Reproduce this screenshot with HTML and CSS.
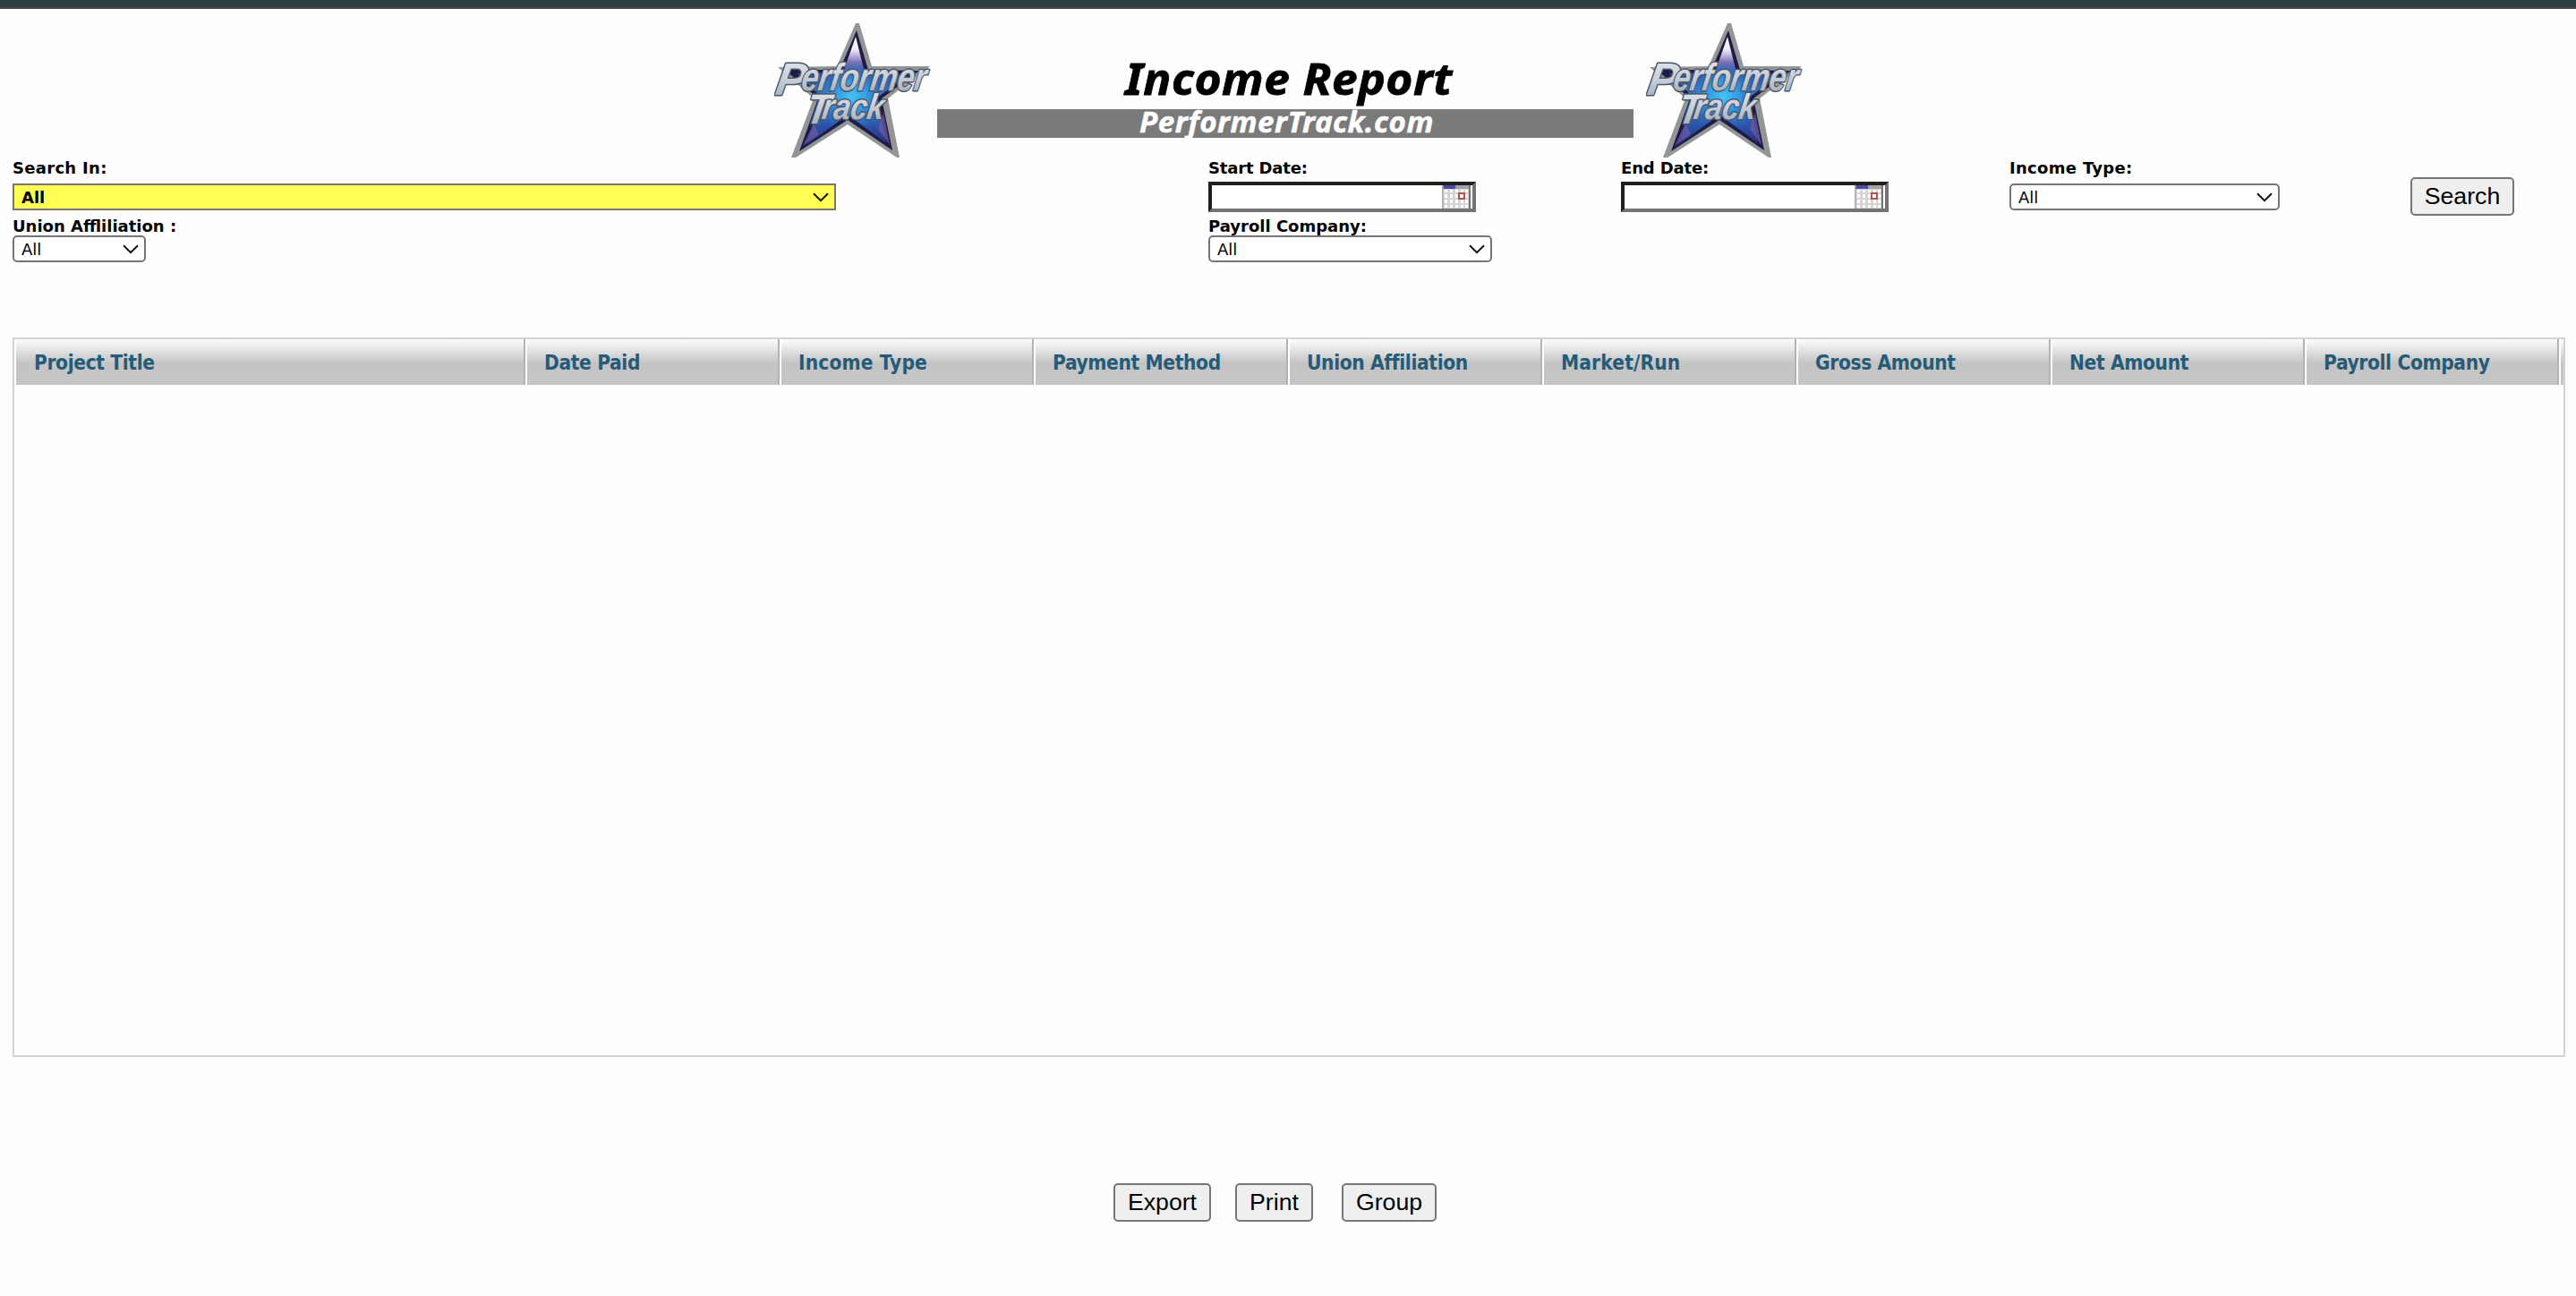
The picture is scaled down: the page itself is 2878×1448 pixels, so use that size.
FILE: index.html
```
<!DOCTYPE html>
<html lang="en">
<head>
<meta charset="utf-8">
<title>Income Report</title>
<link rel="stylesheet" href="styles.css">
</head>
<body>
<svg class="defs" width="0" height="0" aria-hidden="true">
  <defs>
    <linearGradient id="starFill" x1="0" y1="0" x2="0" y2="1">
      <stop offset="0" stop-color="#ffffff"/><stop offset=".12" stop-color="#eeeaf6"/>
      <stop offset=".23" stop-color="#8878b8"/><stop offset=".34" stop-color="#2c55ac"/>
      <stop offset=".55" stop-color="#2f80d0"/><stop offset=".78" stop-color="#2b5db4"/><stop offset="1" stop-color="#2c2a78"/>
    </linearGradient>
    <radialGradient id="starGlow" gradientUnits="userSpaceOnUse" cx="86" cy="82" r="42">
      <stop offset="0" stop-color="#45c4f4"/><stop offset=".4" stop-color="#35a0e8" stop-opacity=".9"/><stop offset="1" stop-color="#2a60b8" stop-opacity="0"/>
    </radialGradient>
    <linearGradient id="metal" x1="0" y1="0" x2="0" y2="1">
      <stop offset="0" stop-color="#e6ebf1"/><stop offset=".5" stop-color="#c6ceda"/><stop offset="1" stop-color="#98a5b5"/>
    </linearGradient>
    <symbol id="logo" viewBox="0 0 176 150">
      <path d="M91 0H95L109 48H174L127 84 140 150H137L82 113 24 150H19L44 84 4 49 70 48Z" fill="#929696"/>
      <path d="M92 8 105 52 162 53 120 84 132 142 82 108 28 143 49 84 12 52 73 52Z" fill="#1e1c46"/>
      <path d="M91 15 101 55 150 57 115 83 125 134 82 102 36 136 54 84 26 56 77 55Z" fill="url(#starFill)"/>
      <path d="M91 15 101 55 150 57 115 83 125 134 82 102 36 136 54 84 26 56 77 55Z" fill="url(#starGlow)"/>
      <path d="M122 100 129 136 116 118ZM44 112 32 137 50 124Z" fill="#6f5ca8" opacity=".7"/>
      <g class="logo-word" fill="url(#metal)" stroke="#4d5664" stroke-width="3" paint-order="stroke" stroke-linejoin="round">
        <text transform="translate(0 80) skewX(-9)" font-size="51" textLength="34" lengthAdjust="spacingAndGlyphs">P</text>
        <text transform="translate(29 75) skewX(-9)" font-size="43" textLength="139" lengthAdjust="spacingAndGlyphs">erformer</text>
        <text transform="translate(34 112) skewX(-9)" font-size="47" textLength="26" lengthAdjust="spacingAndGlyphs">T</text>
        <text transform="translate(52 107) skewX(-9)" font-size="40" textLength="69" lengthAdjust="spacingAndGlyphs">rack</text>
      </g>
    </symbol>
    <symbol id="chevron" viewBox="0 0 18 11"><path d="M1 1.2 9 9.2 17 1.2" fill="none" stroke="#111" stroke-width="2"/></symbol>
    <symbol id="calendar" viewBox="0 0 32 26">
      <path d="M0 0h32v26H0z" fill="#d6d4d4"/>
      <path d="M0 0h1.500v26H0z" fill="#aaa"/>
      <path d="M1.500 0h14v4h-14z" fill="#4a4ca4"/><path d="M15.500 0H30v4H15.500z" fill="#a3a3a3"/>
      <path d="M3 5h3v3H3zm6 0h3v3H9zm6 0h3v3h-3zm6 0h3v3h-3zm5 0h3v3h-3zM3 10h3v4H3zm6 0h3v4H9zm6 0h3v4h-3zm11 0h3v4h-3zM3 16h3v4H3zm6 0h3v4H9zm6 0h3v4h-3zm6 0h3v4h-3zm5 0h3v4h-3zM3 22h3v3H3zm6 0h3v3H9zm6 0h3v3h-3zm6 0h3v3h-3zm5 0h3v3h-3z" fill="#fff"/>
      <path d="M19 9h6v6h-6z" fill="#fff" stroke="#b5534f" stroke-width="2"/>
      <path d="M30 0h2v26h-2z" fill="#77716f"/>
    </symbol>
  </defs>
</svg>

<div class="topbar"></div>

<header class="banner">
  <svg class="logo"><use href="#logo"/></svg>
  <svg class="title" viewBox="0 0 778 150">
    <text x="210" y="80" font-size="49" stroke="#000" stroke-width=".8" textLength="366" lengthAdjust="spacingAndGlyphs">Income Report</text>
    <rect y="96" width="778" height="32" fill="#7a7a7a"/>
    <text x="226" y="121.500" font-size="32" fill="#fff" stroke="#fff" stroke-width=".5" textLength="329" lengthAdjust="spacingAndGlyphs">PerformerTrack.com</text>
  </svg>
  <svg class="logo"><use href="#logo"/></svg>
</header>

<main>
  <form class="filters">
    <div class="group">
      <label class="loose">Search In:</label>
      <div class="select wide yellow"><span>All</span><svg><use href="#chevron"/></svg></div>
      <label class="second">Union Affliliation :</label>
      <div class="select union"><span>All</span><svg><use href="#chevron"/></svg></div>
    </div>
    <div class="group">
      <label>Start Date:</label>
      <div class="date"><svg><use href="#calendar"/></svg></div>
      <label class="second">Payroll Company:</label>
      <div class="select payroll"><span>All</span><svg><use href="#chevron"/></svg></div>
    </div>
    <div class="group">
      <label>End Date:</label>
      <div class="date"><svg><use href="#calendar"/></svg></div>
    </div>
    <div class="group">
      <label class="loose">Income Type:</label>
      <div class="select income"><span>All</span><svg><use href="#chevron"/></svg></div>
    </div>
    <button type="button" class="search">Search</button>
  </form>

  <section class="grid">
    <div class="head">
      <div>Project Title</div><div>Date Paid</div><div class="open">Income Type</div><div>Payment Method</div><div>Union Affiliation</div><div class="open">Market/Run</div><div>Gross Amount</div><div>Net Amount</div><div>Payroll Company</div><div></div>
    </div>
  </section>

  <div class="actions">
    <button type="button" class="export">Export</button>
    <button type="button" class="print">Print</button>
    <button type="button" class="by-group">Group</button>
  </div>
</main>
</body>
</html>
```
FILE: styles.css
```
* { box-sizing: border-box; }
body { margin: 0; background: #fefefe; color: #000; font-family: "DejaVu Sans", sans-serif; font-size: 18px; }
svg { display: block; }
.defs { position: absolute; }
.topbar { height: 10px; background: #2c3e42; border-bottom: 2px solid #474a4a; }

.banner { display: flex; height: 166px; padding: 16px 0 0 865px; }
.logo { width: 176px; height: 150px; flex: none; }
.logo-word { font-family: "Liberation Sans Narrow", "Liberation Sans", sans-serif; font-weight: bold; font-style: italic; }
.title { width: 778px; height: 150px; margin: 0 14px 0 6px; flex: none; font-family: "Noto Sans", sans-serif; font-weight: bold; font-style: italic; letter-spacing: .5px; }

.filters { display: grid; grid-template-columns: 1336px 461px 434px 448px 116px; padding: 0 0 0 14px; height: 201px; align-items: start; }
.group { display: flex; flex-direction: column; align-items: flex-start; }
label { height: 29px; line-height: 24px; font-weight: bold; letter-spacing: -.15px; white-space: nowrap; }
label.loose { letter-spacing: .3px; }
label.second { height: 28px; line-height: 36px; letter-spacing: 0; }
.select { display: flex; align-items: center; justify-content: space-between; height: 30px; padding: 0 6px 0 8px; border: 2px solid #767676; border-radius: 5px; background: #fff; }
.select svg { width: 18px; height: 11px; }
.select span { line-height: 22px; padding-top: 1px; }
.wide { width: 920px; }
.yellow { background: #ffff54; border-radius: 0; font-weight: bold; }
.union { width: 149px; }
.payroll { width: 317px; }
.income { width: 302px; }
.date { width: 299px; height: 34px; margin: -2px 0; border: 4px solid; border-color: #1e1f1f #737373 #737373 #1e1f1f; background: #fff; display: flex; justify-content: flex-end; padding-right: 2px; }
.date svg { width: 32px; height: 26px; }

button { height: 43px; padding: 0 0 2px; border: 2px solid #767676; border-radius: 5px; background: #efefef; color: #000; font: 26.67px/36px "Liberation Sans", Arial, sans-serif; }
.search { width: 116px; margin-top: 22px; }

.grid { margin: 0 12px 0 14px; height: 804px; border: 2px solid #d3d3d3; }
.head { display: grid; grid-template-columns: 571px repeat(8, 284px) 5px; height: 51px; overflow: hidden; }
.head div { padding-left: 19px; border-left: 2px solid #fff; border-right: 2px solid #b3b3b3; border-bottom: 2px solid #b3b3b3; background: linear-gradient(#fdfdfd, #c4c4c4 50%, #c6c6c6); color: #265b78; font: bold 22.5px/53px "DejaVu Sans Condensed", "DejaVu Sans", sans-serif; letter-spacing: -.35px; white-space: nowrap; }
.head div.open { letter-spacing: .15px; }
.head div:first-child { padding-left: 20px; }
.head div:last-child { padding: 0; border-right: 0; }

.actions { display: flex; margin: 141px 0 0 1244px; }
.export { width: 109px; }
.print { width: 87px; margin-left: 27px; }
.by-group { width: 106px; margin-left: 32px; }
```
